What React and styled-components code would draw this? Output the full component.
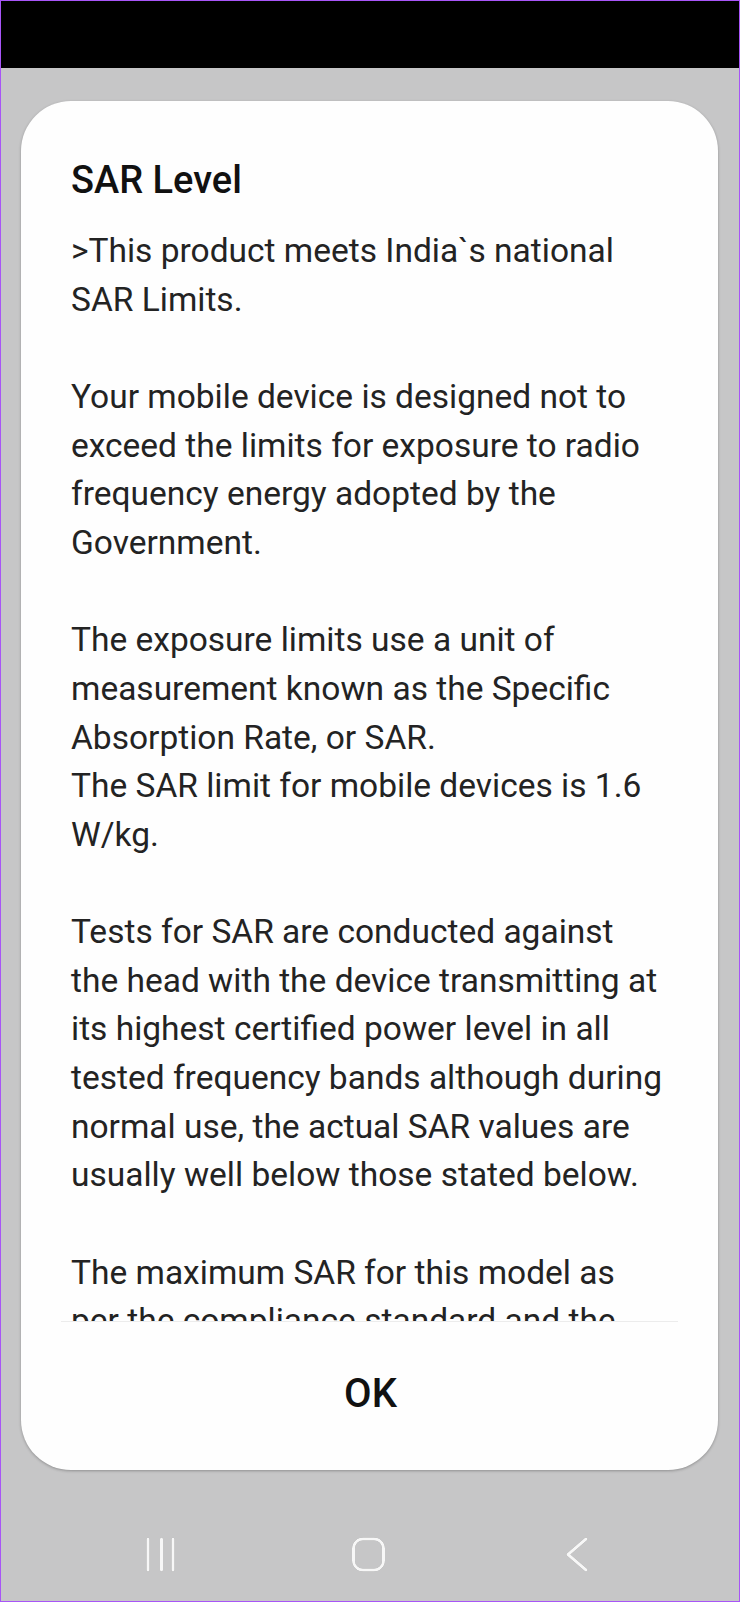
import React from 'react'
import styled, { createGlobalStyle } from 'styled-components'

const GlobalStyle = createGlobalStyle`
    html, body {
        margin: 0;
        padding: 0;
        background: #c6c6c7;
    }
    * {
        box-sizing: border-box;
    }
`

const Screen = styled.div`
    width: 740px;
    height: 1602px;
    border: 1px solid #a855f7;
    background: #c6c6c7;
    display: flex;
    flex-direction: column;
    font-family: Roboto, "Noto Sans", sans-serif;
    overflow: hidden;
`

const StatusBar = styled.div`
    height: 67px;
    flex-shrink: 0;
    background: #000;
`

const Backdrop = styled.div`
    padding: 33px 21px 0 20px;
`

const Dialog = styled.div`
    height: 1369px;
    background: #fefefe;
    border-radius: 50px;
    box-shadow: 0 1px 3px rgba(0, 0, 0, 0.28);
    display: flex;
    flex-direction: column;
    overflow: hidden;
`

const Scroll = styled.div`
    height: 1220px;
    flex-shrink: 0;
    overflow: hidden;
    padding: 57px 40px 0 50px;
`

const Title = styled.h2`
    margin: 0 0 25px;
    font-size: 38px;
    line-height: 44px;
    font-weight: 500;
    color: #111;
`

const Paragraph = styled.div`
    margin-bottom: 48.65px;
`

const Line = styled.div`
    font-size: 33.5px;
    line-height: 48.65px;
    color: #232323;
    white-space: nowrap;
`

const Divider = styled.div`
    height: 1px;
    margin: 0 40px;
    background: #ececec;
    flex-shrink: 0;
`

const Actions = styled.div`
    flex: 1;
    display: flex;
    align-items: center;
    justify-content: center;
    padding: 0 0 4px 2px;
`

const OkButton = styled.button`
    border: none;
    background: none;
    padding: 0 40px;
    font-family: Roboto, "Noto Sans", sans-serif;
    font-size: 40px;
    line-height: 40px;
    font-weight: 500;
    color: #111;
    cursor: pointer;
`

const NavBar = styled.div`
    flex: 1;
    display: flex;
    align-items: flex-start;
    gap: 176px;
    padding: 66px 0 0 144px;
`

const NavIcon = styled.svg`
    display: block;
    flex-shrink: 0;
    filter: drop-shadow(0 0 0.6px rgba(90, 90, 90, 0.7));
`

const paragraphs = [
    [">This product meets India`s national", "SAR Limits."],
    [
        "Your mobile device is designed not to",
        "exceed the limits for exposure to radio",
        "frequency energy adopted by the",
        "Government.",
    ],
    [
        "The exposure limits use a unit of",
        "measurement known as the Specific",
        "Absorption Rate, or SAR.",
        "The SAR limit for mobile devices is 1.6",
        "W/kg.",
    ],
    [
        "Tests for SAR are conducted against",
        "the head with the device transmitting at",
        "its highest certified power level in all",
        "tested frequency bands although during",
        "normal use, the actual SAR values are",
        "usually well below those stated below.",
    ],
    ["The maximum SAR for this model as", "per the compliance standard and the"],
]

const App = () => {
    return (
        <Screen>
            <GlobalStyle />
            <StatusBar />
            <Backdrop>
                <Dialog>
                    <Scroll>
                        <Title>SAR Level</Title>
                        {paragraphs.map((lines, i) => (
                            <Paragraph key={i}>
                                {lines.map((l) => <Line key={l}>{l}</Line>)}
                            </Paragraph>
                        ))}
                    </Scroll>
                    <Divider />
                    <Actions>
                        <OkButton>OK</OkButton>
                    </Actions>
                </Dialog>
            </Backdrop>
            <NavBar>
                <NavIcon width="31" height="37" viewBox="0 0 31 37">
                    <g stroke="#f7f7f7" strokeWidth="3" strokeLinecap="round">
                        <line x1="3" y1="3" x2="3" y2="34" />
                        <line x1="16.5" y1="3" x2="16.5" y2="34" />
                        <line x1="28" y1="3" x2="28" y2="34" />
                    </g>
                </NavIcon>
                <NavIcon width="34" height="37" viewBox="0 0 34 37">
                    <rect x="1.5" y="3" width="30" height="31" rx="9.5" fill="none" stroke="#f7f7f7" strokeWidth="3" />
                </NavIcon>
                <NavIcon width="24" height="37" viewBox="0 0 24 37" style={{ marginLeft: 3 }}>
                    <polyline points="21,3 3,18.5 21,34" fill="none" stroke="#f7f7f7" strokeWidth="3" strokeLinecap="round" strokeLinejoin="round" />
                </NavIcon>
            </NavBar>
        </Screen>
    )
}

export default App
